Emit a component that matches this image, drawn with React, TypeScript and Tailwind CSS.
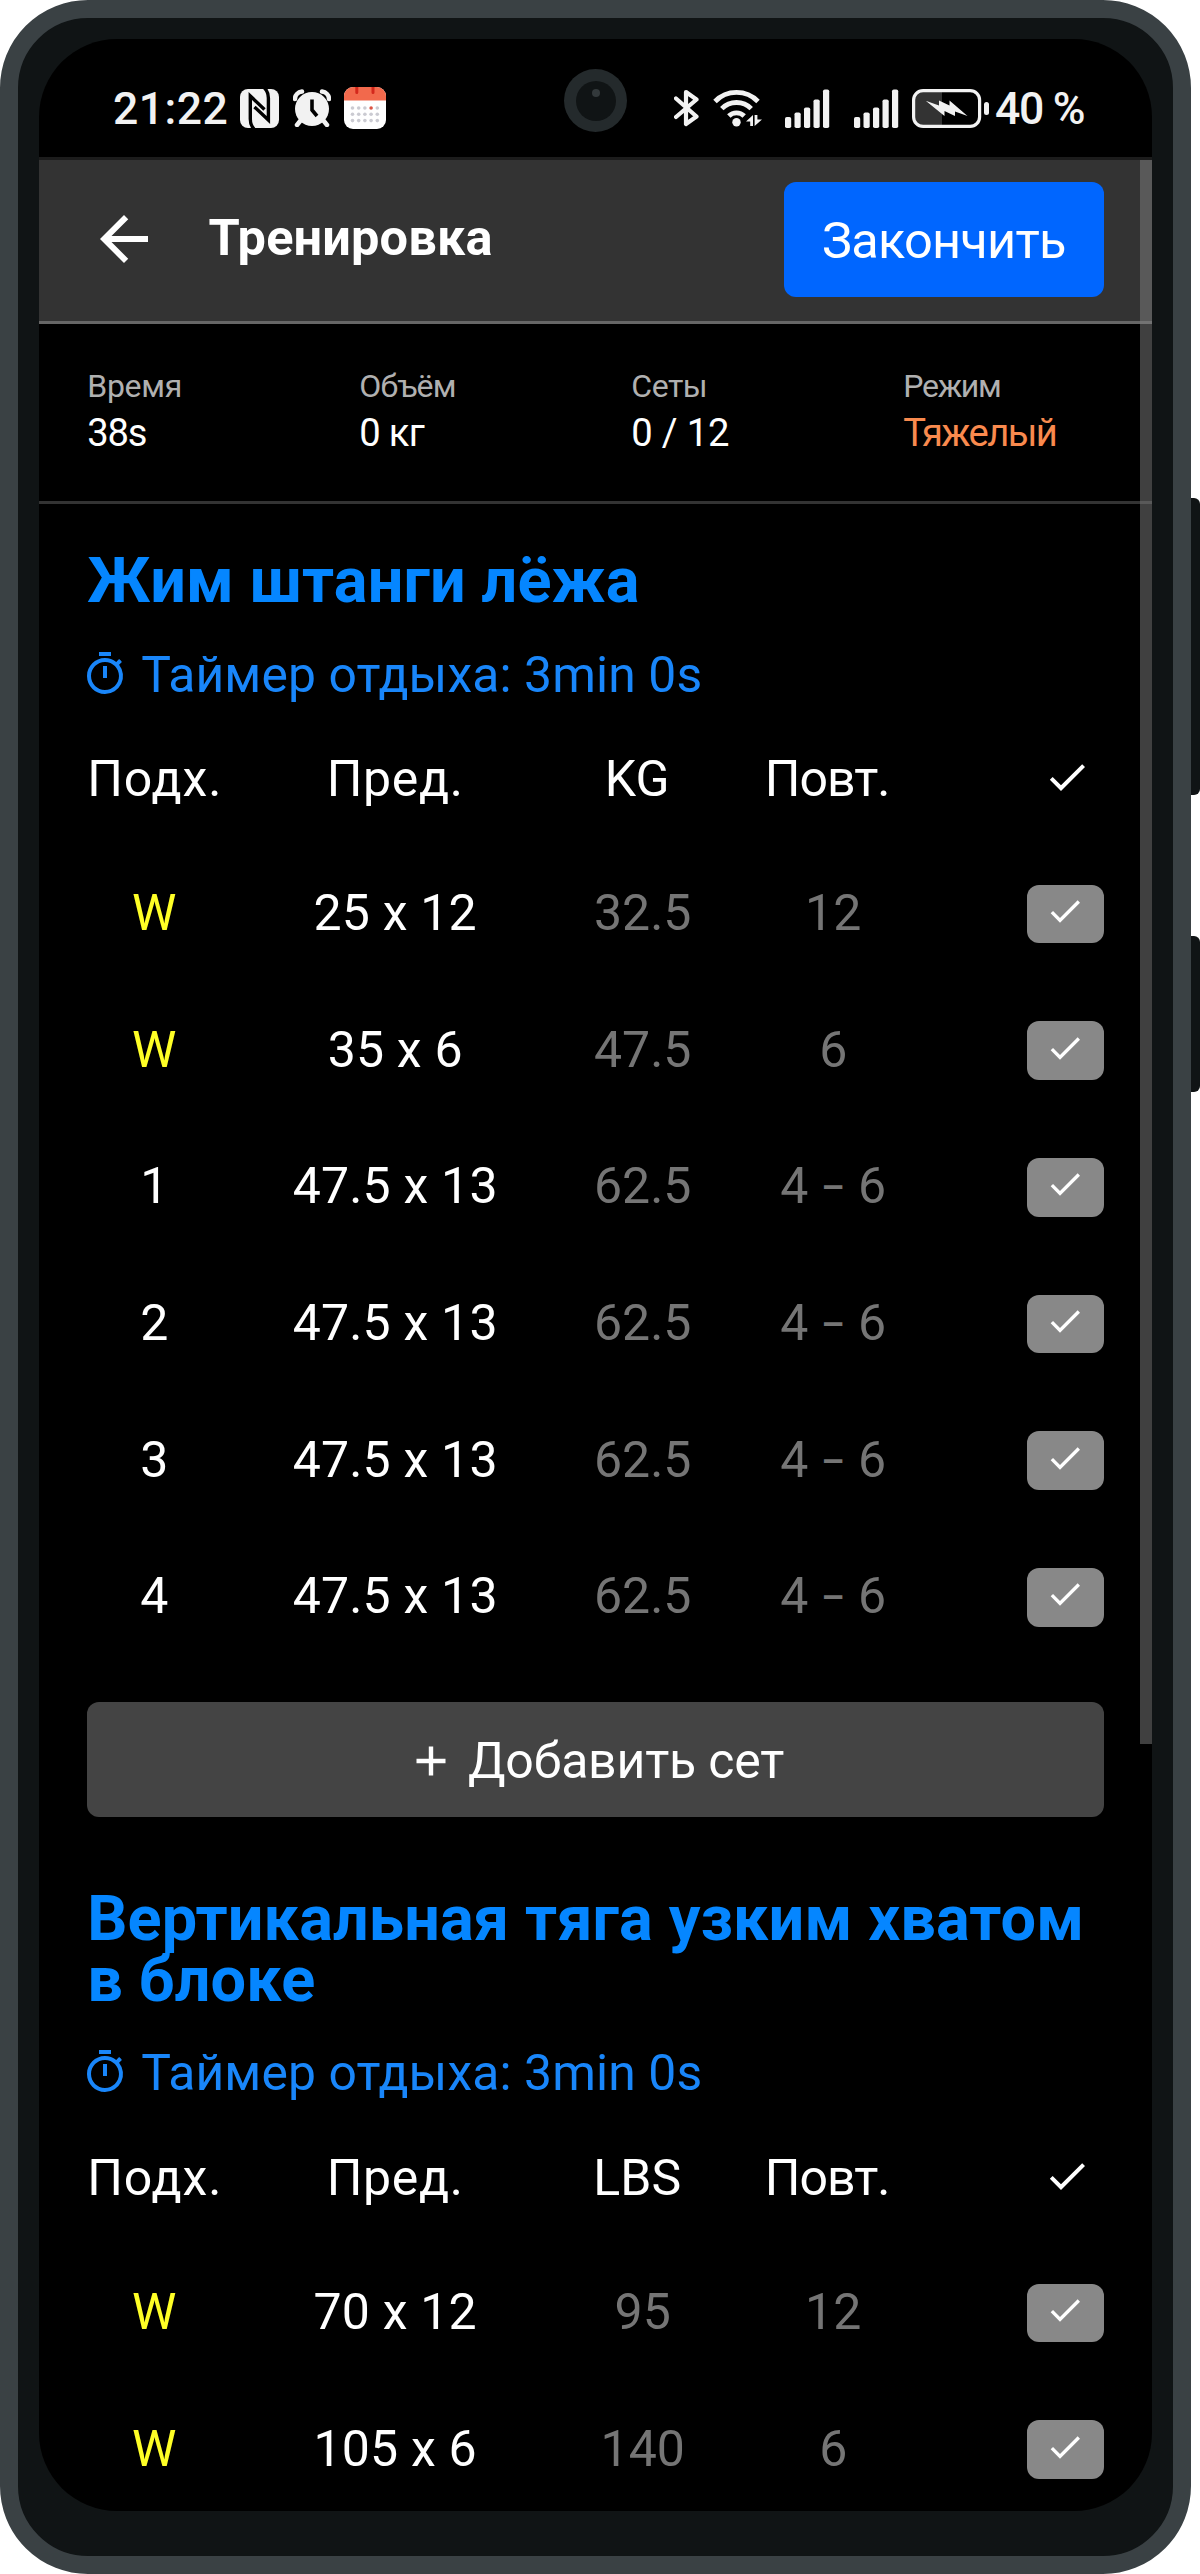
import React from 'react';
import { MdArrowBack, MdCheck, MdOutlineTimer } from 'react-icons/md';

type SetRow = { label: string; prev: string; weight: string; reps: string };
type Exercise = { title: string; unit: string; rows: SetRow[]; canAddSet: boolean };

const stats = [
  { label: 'Время', labelClass: 'tracking-[-0.3px]', value: '38s', valueClass: 'text-white tracking-[-1.2px]' },
  { label: 'Объём', labelClass: 'tracking-[-0.8px]', value: '0 кг', valueClass: 'text-white tracking-[-0.7px]' },
  { label: 'Сеты', labelClass: 'tracking-[-0.5px]', value: '0 / 12', valueClass: 'text-white tracking-[-0.2px]' },
  { label: 'Режим', labelClass: 'tracking-[-1.3px]', value: 'Тяжелый', valueClass: 'text-[#f98a4e] tracking-[-1.6px]' },
];

const work = (label: string): SetRow => ({ label, prev: '47.5 x 13', weight: '62.5', reps: '4 – 6' });

const exercises: Exercise[] = [
  {
    title: 'Жим штанги лёжа',
    unit: 'KG',
    canAddSet: true,
    rows: [
      { label: 'W', prev: '25 x 12', weight: '32.5', reps: '12' },
      { label: 'W', prev: '35 x 6', weight: '47.5', reps: '6' },
      work('1'),
      work('2'),
      work('3'),
      work('4'),
    ],
  },
  {
    title: 'Вертикальная тяга узким хватом в блоке',
    unit: 'LBS',
    canAddSet: false,
    rows: [
      { label: 'W', prev: '70 x 12', weight: '95', reps: '12' },
      { label: 'W', prev: '105 x 6', weight: '140', reps: '6' },
    ],
  },
];

const columns = 'grid grid-cols-[134px_348px_136px_244px_154.6px]';

function NfcIcon() {
  return (
    <svg width="39" height="39" viewBox="0 0 39 39" className="shrink-0">
      <rect width="39" height="39" rx="8" fill="#f2f2f2" />
      <path d="M14 40C11 37 10.3 34 10.3 30V7L24.5 20.5" fill="none" stroke="#000" strokeWidth="3.4" />
      <path d="M24.5 -1C27.5 2 28.4 5 28.4 9V31L14.5 18" fill="none" stroke="#000" strokeWidth="3.4" />
    </svg>
  );
}

function AlarmIcon() {
  return (
    <svg width="38" height="38" viewBox="0 0 38 38" className="ml-[14px] shrink-0" fill="none" stroke="#f2f2f2">
      <circle cx="19" cy="20" r="17" fill="#f2f2f2" stroke="none" />
      <path d="M8 31L4 36M30 31L34 36" strokeWidth="4.5" strokeLinecap="round" />
      <path d="M2 10C2 6 5 3 9 2.5M36 10C36 6 33 3 29 2.5" strokeWidth="4.5" strokeLinecap="round" />
      <path d="M19 10.5V21L24 27" stroke="#000" strokeWidth="3.6" />
    </svg>
  );
}

function CalendarIcon() {
  return (
    <svg width="42" height="42" viewBox="0 0 42 42" className="ml-[12.5px] shrink-0">
      <rect width="42" height="42" rx="9" fill="#fff" />
      <path d="M0 13.5V9A9 9 0 0 1 9 0H33A9 9 0 0 1 42 9V13.5Z" fill="#f2694c" />
      <path d="M12.8 0.5V5.5M29 0.5V5.5" stroke="#d4281c" strokeWidth="3" strokeLinecap="round" />
      {[21, 27.3, 33.6].map((y) =>
        [8.5, 14.7, 20.9, 27.1, 33.3].map((x) => (
          <circle key={`${x}-${y}`} cx={x} cy={y} r="1.8" fill={x === 27.1 && y === 21 ? '#dd5544' : '#cbcbd2'} />
        )),
      )}
    </svg>
  );
}

function BluetoothIcon() {
  return (
    <svg width="26" height="38" viewBox="0 0 26 38" className="shrink-0">
      <path d="M2 9.5L22.5 27.5L12 35V3L22.5 10.5L2 28" fill="none" stroke="#f2f2f2" strokeWidth="4.2" strokeLinecap="round" strokeLinejoin="round" />
    </svg>
  );
}

function WifiIcon() {
  return (
    <svg width="50" height="38" viewBox="0 0 50 38" className="ml-[13px] shrink-0">
      <g fill="none" stroke="#f2f2f2" strokeWidth="4.8">
        <path d="M2 12.5A30 30 0 0 1 45 12.5" />
        <path d="M8.8 19.7A20.5 20.5 0 0 1 38.2 19.7" />
        <path d="M15.8 27A11 11 0 0 1 31.2 27" />
      </g>
      <circle cx="23.5" cy="33.3" r="4.2" fill="#f2f2f2" />
      <path d="M40 26V37H37.2V32.5H33ZM41.6 37V26H44.4V30.5H49Z" fill="#f2f2f2" />
    </svg>
  );
}

function SignalIcon({ className }: { className: string }) {
  return (
    <svg width="45" height="39" viewBox="0 0 45 39" className={`shrink-0 ${className}`} fill="#f2f2f2">
      {[11, 15.5, 20.5, 28.5, 38.5].map((h, i) => (
        <rect key={h} x={i * 9.5} y={39 - h} width="6.2" height={h} rx="1.8" />
      ))}
    </svg>
  );
}

function BatteryIcon() {
  return (
    <svg width="78" height="39" viewBox="0 0 78 39" className="ml-[13px] shrink-0">
      <path d="M3 11A8 8 0 0 1 11 3H30V36H11A8 8 0 0 1 3 28Z" fill="#333" />
      <rect x="1.6" y="1.6" width="66" height="35.8" rx="9.5" fill="none" stroke="#f2f2f2" strokeWidth="3.2" />
      <rect x="72" y="13" width="5" height="13" rx="2.5" fill="#f2f2f2" />
      <path d="M13.7 11.7L27 16.5V11.5L37.5 16.5V11.5L55.5 27L43 22.5V27L32.5 22V27Z" fill="#f2f2f2" />
    </svg>
  );
}

function StatusBar() {
  return (
    <div className="relative flex h-[118px] shrink-0 items-center pt-[20px] pl-[74px] text-[44.5px] font-medium text-[#f2f2f2]">
      <span className="w-[127px] pt-[2px] whitespace-nowrap tracking-[0.5px]">21:22</span>
      <NfcIcon />
      <AlarmIcon />
      <CalendarIcon />
      <div className="ml-[288px] flex items-center">
        <BluetoothIcon />
        <WifiIcon />
        <SignalIcon className="ml-[22.5px]" />
        <SignalIcon className="ml-[24px]" />
        <BatteryIcon />
        <span className="ml-[5px] pt-[2px] whitespace-nowrap tracking-[-1.3px]">40 %</span>
      </div>
      <div className="absolute top-[30px] left-[525px] size-[63px] rounded-full bg-[#242a2c] p-[11.5px]">
        <div className="flex size-full justify-center rounded-full bg-[#101415] pt-[8px]">
          <div className="size-[8px] rounded-full bg-[#33393b]" />
        </div>
      </div>
    </div>
  );
}

function Reps({ value }: { value: string }) {
  const [from, to] = value.split(' – ');
  if (!to) return <span className="pt-[1px] pl-[12px]">{value}</span>;
  return (
    <span className="pt-[1px] pl-[12px] whitespace-nowrap">
      {from} <span className="-mx-[4px] inline-block translate-y-[2px] scale-x-[0.75]">–</span> {to}
    </span>
  );
}

function ExerciseCard({ exercise }: { exercise: Exercise }) {
  return (
    <section className="flex flex-col">
      <h2 className="-mr-6 text-[63px] leading-[61px] font-bold text-[#0586ff] tracking-[0.12px]">{exercise.title}</h2>
      <div className="mt-[33.5px] flex h-[60px] items-center text-[49.8px] leading-[60px] text-[#1986fa]">
        <MdOutlineTimer size={48} className="-mt-[2px] -ml-[6px] shrink-0" />
        <span className="ml-[12px] whitespace-nowrap tracking-[0.12px]">Таймер отдыха: 3min 0s</span>
      </div>
      <div className={`${columns} mt-[44.5px] h-[60px] text-center text-[50px] leading-[60px] text-white`}>
        <span className="tracking-[0.9px]">Подх.</span>
        <span className="tracking-[0.7px]">Пред.</span>
        <span>{exercise.unit}</span>
        <span className="tracking-[-1px]">Повт.</span>
        <span className="flex justify-end pt-[4px] pr-[13px]">
          <MdCheck size={48} />
        </span>
      </div>
      <div className="mt-[35.6px] flex flex-col text-[50px]">
        {exercise.rows.map((row, i) => (
          <div key={i} className={`${columns} h-[136.67px] items-center text-center text-[#757575]`}>
            <span className={row.label === 'W' ? 'pt-[1px] text-[#ffff26]' : 'pt-[1px] text-white'}>{row.label}</span>
            <span className="pt-[1px] whitespace-nowrap text-white tracking-[0.2px]">{row.prev}</span>
            <span className="pt-[1px] pl-[11px]">{row.weight}</span>
            <Reps value={row.reps} />
            <span className="flex justify-end pt-[2px]">
              <span className="flex h-[58.6px] w-[76.6px] justify-center rounded-[12px] bg-[#888888] pt-[6.5px] text-white">
                <MdCheck size={40} />
              </span>
            </span>
          </div>
        ))}
      </div>
      {exercise.canAddSet && (
        <button className="mt-[37.4px] flex h-[115.5px] shrink-0 items-center justify-center rounded-[12px] bg-[#444444] pt-[3px] pl-[9px] text-[50px] text-white">
          <svg width="30" height="30" viewBox="0 0 30 30" className="mr-[22px]">
            <path d="M15 0.5V29.5M0.5 15H29.5" stroke="#fff" strokeWidth="4.4" />
          </svg>
          <span className="tracking-[-0.2px]">Добавить сет</span>
        </button>
      )}
    </section>
  );
}

export default function App() {
  return (
    <div className="relative h-[2574px] w-[1200px] overflow-hidden bg-white" style={{ fontFamily: 'Roboto, sans-serif' }}>
      <div className="absolute top-[498px] left-[1185px] h-[297px] w-[15px] rounded-r-[6px] bg-[#101415]" />
      <div className="absolute top-[936px] left-[1185px] h-[156px] w-[15px] rounded-r-[6px] bg-[#101415]" />
      <div className="relative h-full w-[1191px] rounded-[88px] border-[18px] border-[#3a4144] bg-[#101415] px-[21px] pt-[21px] pb-[45px]">
        <main className="relative flex h-full w-[1113px] flex-col overflow-hidden rounded-[78px] bg-black">
          <StatusBar />
          <header className="flex h-[167px] shrink-0 items-center border-t-[3px] border-b-[3px] border-t-[#1c1c1c] border-b-[#666666] bg-[#333333] pr-[48.4px] pl-[48.5px] text-white">
            <MdArrowBack size={72} className="-mt-[3px] shrink-0" />
            <h1 className="-mt-[5px] ml-[49px] text-[50.5px] leading-[60px] font-bold tracking-[0.15px]">Тренировка</h1>
            <button className="-mt-[2px] ml-auto h-[115.5px] w-[319.6px] rounded-[12px] bg-[#0066ff] pt-[2px] text-[50.5px] tracking-[-0.75px]">
              Закончить
            </button>
          </header>
          <div className="grid h-[180px] shrink-0 grid-cols-[272px_272px_272px_1fr] border-b-[3px] border-[#333333] pt-[41.5px] pl-[48.3px]">
            {stats.map((s) => (
              <div key={s.label}>
                <div className={`text-[32px] leading-[40px] text-[#b0b0b0] ${s.labelClass}`}>{s.label}</div>
                <div className={`mt-[2px] text-[38.2px] leading-[50px] ${s.valueClass}`}>{s.value}</div>
              </div>
            ))}
          </div>
          <div className="flex flex-col gap-[70.5px] px-[48.2px] pt-[46px]">
            {exercises.map((e) => (
              <ExerciseCard key={e.title} exercise={e} />
            ))}
          </div>
          <div className="absolute top-[121px] right-0 h-[1584px] w-[12px] bg-[#808080]/50" />
        </main>
      </div>
    </div>
  );
}
